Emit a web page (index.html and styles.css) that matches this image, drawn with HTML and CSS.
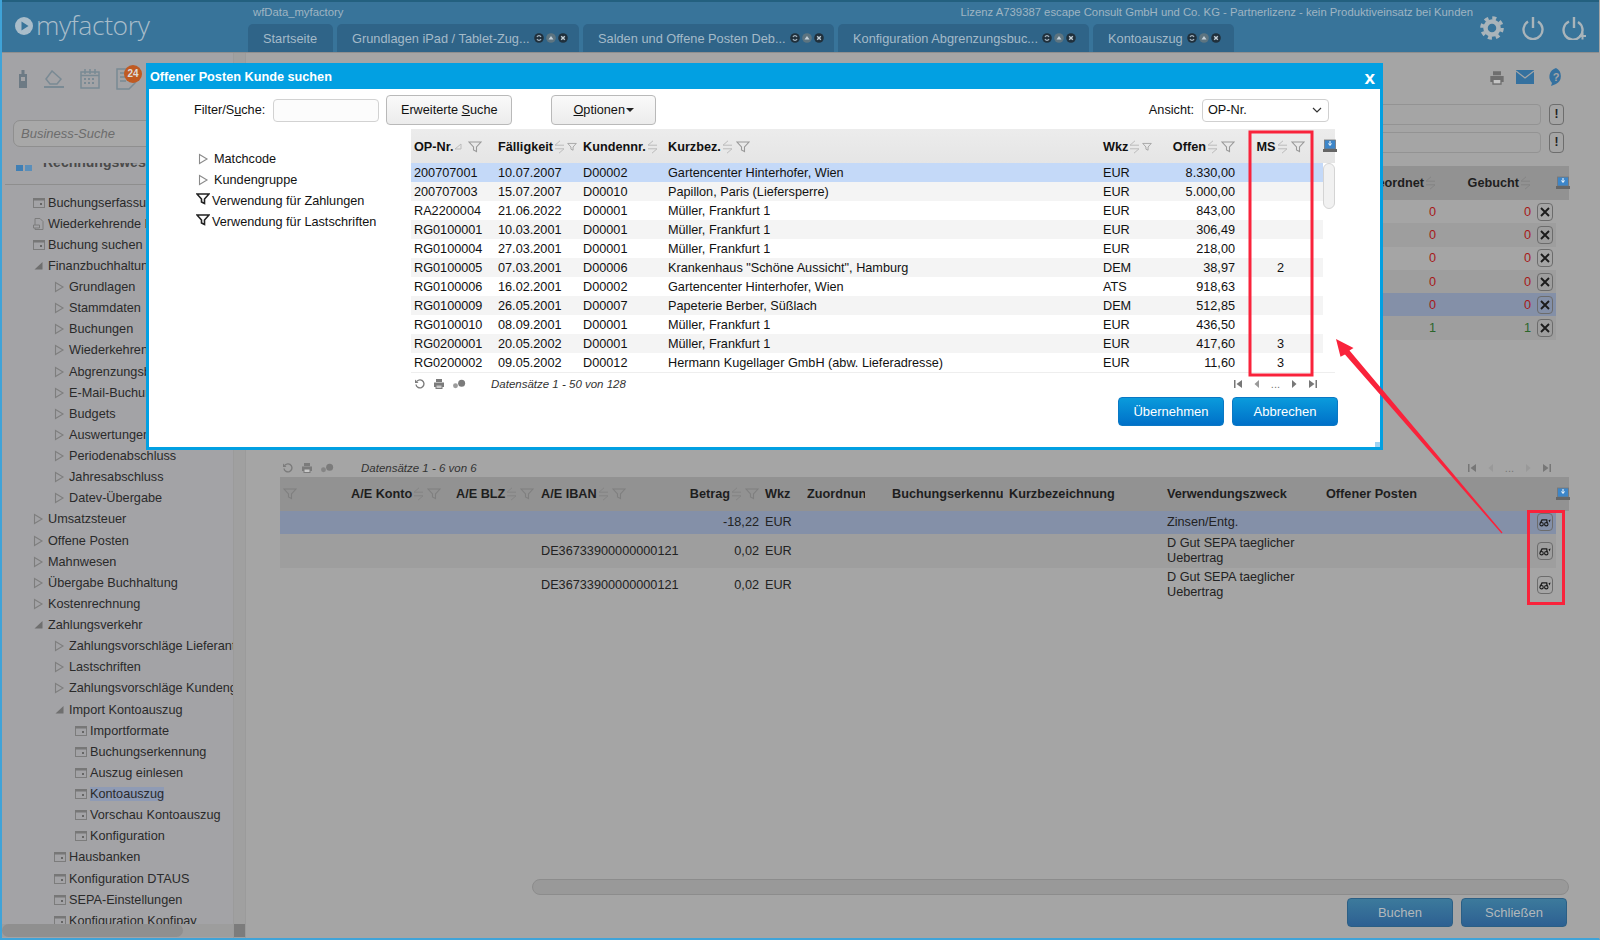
FILE: index.html
```html
<!DOCTYPE html>
<html>

<head>
	<meta charset="UTF-8">
	<title>myfactory - Kontoauszug</title>
	<link rel="stylesheet" href="styles.css">
</head>

<body>
	<svg class="defs" width="0" height="0">
		<symbol id="i-win" viewBox="0 0 14 14"><rect x="1.5" y="2.5" width="11" height="9" fill="none" stroke="#7c7c7c"/><rect x="1" y="2" width="12" height="2.5" fill="#777"/><rect x="8" y="7" width="2" height="2" fill="#666"/></symbol>
		<symbol id="i-doc" viewBox="0 0 14 14"><path d="M3 1.5h5l3 3v8H3z" fill="none" stroke="#7c7c7c"/><path d="M1.5 8h6v3h-6z" fill="#a3a3a6" stroke="#7c7c7c"/></symbol>
		<symbol id="i-tri" viewBox="0 0 14 14"><path d="M2.5 2.5l7.5 4.5-7.5 4.5z" fill="none" stroke="currentColor" stroke-width="1.1"/></symbol>
		<symbol id="i-open" viewBox="0 0 14 14"><path d="M10.5 3v7.5h-8z" fill="#6f6f6f"/></symbol>
		<symbol id="i-funnel" viewBox="0 0 14 12"><path d="M1 1h12L8.5 6v4.5L5.5 9V6z" fill="none" stroke="currentColor" stroke-width="1.1"/></symbol>
		<symbol id="i-funnel-b" viewBox="0 0 14 12"><path d="M1 1h12L8.5 6v4.5L5.5 9V6z" fill="none" stroke="#222" stroke-width="1.6"/></symbol>
		<symbol id="i-sort" viewBox="0 0 11 14"><path d="M6 .8L1 5.2h9M5 13.2l5-4.4H1" fill="none" stroke="currentColor"/></symbol>
		<symbol id="i-up" viewBox="0 0 11 14"><path d="M1 9l6-5v5z" fill="none" stroke="currentColor"/></symbol>
		<symbol id="i-cfg" viewBox="0 0 14 14"><rect x="1.500" y="1" width="11" height="9" fill="#3d86c9" stroke="#777" stroke-width=".8"/><path d="M7 2v4M5.500 4.500L7 6.500l1.500-2" stroke="#fff" fill="none"/><rect x="0" y="10" width="14" height="3" fill="#666"/></symbol>
		<symbol id="i-refresh" viewBox="0 0 12 12"><path d="M3 3.200A4 4 0 1 1 2 6.500" fill="none" stroke="currentColor" stroke-width="1.400"/><path d="M1 1.500v3.500h3.500z" fill="currentColor"/></symbol>
		<symbol id="i-print" viewBox="0 0 12 12"><path d="M3 1h6v3H3zM1 4.500h10V9H9.500v2h-7V9H1z" fill="currentColor"/><path d="M3.500 7.500h5V10h-5z" fill="#fff" fill-opacity=".6"/></symbol>
		<symbol id="i-gears" viewBox="0 0 16 12"><circle cx="4" cy="8" r="2.800" fill="currentColor" fill-opacity=".75"/><circle cx="11" cy="5" r="4" fill="currentColor"/></symbol>
		<symbol id="i-first" viewBox="0 0 10 10"><path d="M1 1h1.500v8H1zM9 1v8L3.500 5z" fill="currentColor"/></symbol>
		<symbol id="i-last" viewBox="0 0 10 10"><path d="M9 1H7.500v8H9zM1 1v8l5.500-4z" fill="currentColor"/></symbol>
		<symbol id="i-prev" viewBox="0 0 10 10"><path d="M7 1v8L2.500 5z" fill="currentColor"/></symbol>
		<symbol id="i-next" viewBox="0 0 10 10"><path d="M3 1v8l4.500-4z" fill="currentColor"/></symbol>
		<symbol id="i-x" viewBox="0 0 12 12"><path d="M2 2l8 8M10 2l-8 8" stroke="#1c1c1c" stroke-width="1.900"/></symbol>
		<symbol id="i-bino" viewBox="0 0 14 10"><path d="M1.500 6l2-4h5.500l.5 4" fill="none" stroke="#1c1c1c" stroke-width="1.500"/><circle cx="3" cy="7" r="2" fill="none" stroke="#1c1c1c" stroke-width="1.300"/><circle cx="8.500" cy="7" r="2" fill="none" stroke="#1c1c1c" stroke-width="1.300"/><path d="M11 2.500l2.500-1-1 3.500z" fill="#1c1c1c"/></symbol>
		<symbol id="t-ref" viewBox="0 0 10 10"><circle cx="5" cy="5" r="4.800" fill="#20303c"/><path d="M3 4a2.200 2.200 0 0 1 4 0M7 6a2.200 2.200 0 0 1-4 0" fill="none" stroke="#a6b6c2" stroke-width="1.200"/></symbol>
		<symbol id="t-up" viewBox="0 0 10 10"><circle cx="5" cy="5" r="4.800" fill="#5d7480"/><path d="M2.500 6.500L5 3l2.500 3.500z" fill="#c4d0d8"/></symbol>
		<symbol id="t-x" viewBox="0 0 10 10"><circle cx="5" cy="5" r="4.800" fill="#20303c"/><path d="M3.200 3.200l3.600 3.600M6.800 3.200L3.200 6.800" stroke="#c4d0d8" stroke-width="1.400"/></symbol>
	</svg>

	<div class="screen">
		<header class="topbar">
			<div class="logo">
				<svg class="logo-mark" viewBox="0 0 18 18"><circle cx="9" cy="9" r="9" fill="#a9bdca"/><path d="M6.500 4.500l7 4.500-7 4.500z" fill="#38749a"/></svg>
				<span>myfactory</span>
			</div>
			<div class="top-mid">
				<div class="top-info">
					<span>wfData_myfactory</span>
					<span class="license">Lizenz A739387 escape Consult GmbH und Co. KG - Partnerlizenz - kein Produktiveinsatz bei Kunden</span>
				</div>
				<nav class="tabs">
					<div class="tab tab-home">Startseite</div>
					<div class="tab tab-a"><span>Grundlagen iPad / Tablet-Zug...</span><svg class="ti"><use href="#t-ref"/></svg><svg class="ti"><use href="#t-up"/></svg><svg class="ti"><use href="#t-x"/></svg></div>
					<div class="tab tab-b"><span>Salden und Offene Posten Deb...</span><svg class="ti"><use href="#t-ref"/></svg><svg class="ti"><use href="#t-up"/></svg><svg class="ti"><use href="#t-x"/></svg></div>
					<div class="tab tab-c"><span>Konfiguration Abgrenzungsbuc...</span><svg class="ti"><use href="#t-ref"/></svg><svg class="ti"><use href="#t-up"/></svg><svg class="ti"><use href="#t-x"/></svg></div>
					<div class="tab tab-d"><span>Kontoauszug</span><svg class="ti"><use href="#t-ref"/></svg><svg class="ti"><use href="#t-up"/></svg><svg class="ti"><use href="#t-x"/></svg></div>
				</nav>
			</div>
			<div class="top-icons">
				<svg viewBox="0 0 24 24" width="24" height="24"><circle cx="12" cy="12" r="6.500" fill="none" stroke="#a9b4ba" stroke-width="4.500"/><circle cx="12" cy="12" r="10" fill="none" stroke="#a9b4ba" stroke-width="3.600" stroke-dasharray="4 3.850"/></svg>
				<svg viewBox="0 0 24 24" width="24" height="24"><path d="M7 5.500a9.500 9.500 0 1 0 10 0M12 1v11" fill="none" stroke="#a9b4ba" stroke-width="2.400"/></svg>
				<svg viewBox="0 0 24 24" width="24" height="24"><path d="M7 5.500a9.500 9.500 0 1 0 9 .5M12 1v11" fill="none" stroke="#a9b4ba" stroke-width="2.400"/><path d="M17 20h7M20.500 16.500v7" stroke="#a9b4ba" stroke-width="2"/></svg>
			</div>
		</header>

		<div class="workspace">
			<aside class="sidebar">
				<div class="side-tools">
					<svg viewBox="0 0 10 18" width="10" height="18"><path d="M3.500 0h3v4h2.500v14H1V4h2.500z" fill="#6d7a84"/><rect x="3" y="7" width="4" height="4" fill="#a3a3a6"/></svg>
					<svg viewBox="0 0 20 18" width="20" height="18"><path d="M2 9l6-8 9 8-4 5H6z" fill="none" stroke="#7a8a94" stroke-width="1.500"/><path d="M0 17h20" stroke="#7a8a94" stroke-width="2"/></svg>
					<svg viewBox="0 0 20 20" width="20" height="20"><rect x="1" y="3" width="18" height="16" fill="none" stroke="#7a8a94" stroke-width="1.500"/><path d="M1 6.500h18M5 0v5M15 0v5M10 0v5" stroke="#7a8a94" stroke-width="1.500"/><path d="M4 10h12M4 14h12" stroke="#7a8a94" stroke-width="2" stroke-dasharray="2 2"/></svg>
					<div class="notes">
						<svg viewBox="0 0 20 22" width="20" height="22"><path d="M1 1h18v14l-6 6H1z" fill="none" stroke="#7a8a94" stroke-width="1.500"/><path d="M4 5h9M4 9h9M4 13h6" stroke="#7a8a94" stroke-width="1.500"/></svg>
						<span class="badge">24</span>
					</div>
				</div>
				<div class="side-search">Business-Suche</div>
				<div class="side-head">
					<svg viewBox="0 0 17 6" width="17" height="6"><rect width="7" height="6" fill="#3f7fb5"/><rect x="9" width="7" height="6" fill="#5b8fba"/></svg>
					<span>Rechnungswesen</span>
				</div>
				<ul class="tree">
					<li class="l1"><svg class="ic"><use href="#i-win"/></svg>Buchungserfassung</li>
					<li class="l1"><svg class="ic"><use href="#i-doc"/></svg>Wiederkehrende Buchungen</li>
					<li class="l1"><svg class="ic"><use href="#i-win"/></svg>Buchung suchen</li>
					<li class="l1"><svg class="ic"><use href="#i-open"/></svg>Finanzbuchhaltung</li>
					<li class="l2"><svg class="ic"><use href="#i-tri"/></svg>Grundlagen</li>
					<li class="l2"><svg class="ic"><use href="#i-tri"/></svg>Stammdaten</li>
					<li class="l2"><svg class="ic"><use href="#i-tri"/></svg>Buchungen</li>
					<li class="l2"><svg class="ic"><use href="#i-tri"/></svg>Wiederkehrende Buchungen</li>
					<li class="l2"><svg class="ic"><use href="#i-tri"/></svg>Abgrenzungsbuchungen</li>
					<li class="l2"><svg class="ic"><use href="#i-tri"/></svg>E-Mail-Buchungen</li>
					<li class="l2"><svg class="ic"><use href="#i-tri"/></svg>Budgets</li>
					<li class="l2"><svg class="ic"><use href="#i-tri"/></svg>Auswertungen</li>
					<li class="l2"><svg class="ic"><use href="#i-tri"/></svg>Periodenabschluss</li>
					<li class="l2"><svg class="ic"><use href="#i-tri"/></svg>Jahresabschluss</li>
					<li class="l2"><svg class="ic"><use href="#i-tri"/></svg>Datev-Übergabe</li>
					<li class="l1"><svg class="ic"><use href="#i-tri"/></svg>Umsatzsteuer</li>
					<li class="l1"><svg class="ic"><use href="#i-tri"/></svg>Offene Posten</li>
					<li class="l1"><svg class="ic"><use href="#i-tri"/></svg>Mahnwesen</li>
					<li class="l1"><svg class="ic"><use href="#i-tri"/></svg>Übergabe Buchhaltung</li>
					<li class="l1"><svg class="ic"><use href="#i-tri"/></svg>Kostenrechnung</li>
					<li class="l1"><svg class="ic"><use href="#i-open"/></svg>Zahlungsverkehr</li>
					<li class="l2"><svg class="ic"><use href="#i-tri"/></svg>Zahlungsvorschläge Lieferanten</li>
					<li class="l2"><svg class="ic"><use href="#i-tri"/></svg>Lastschriften</li>
					<li class="l2"><svg class="ic"><use href="#i-tri"/></svg>Zahlungsvorschläge Kundengruppen</li>
					<li class="l2"><svg class="ic"><use href="#i-open"/></svg>Import Kontoauszug</li>
					<li class="l3"><svg class="ic"><use href="#i-win"/></svg>Importformate</li>
					<li class="l3"><svg class="ic"><use href="#i-win"/></svg>Buchungserkennung</li>
					<li class="l3"><svg class="ic"><use href="#i-win"/></svg>Auszug einlesen</li>
					<li class="l3"><svg class="ic"><use href="#i-win"/></svg><span class="current">Kontoauszug</span></li>
					<li class="l3"><svg class="ic"><use href="#i-win"/></svg>Vorschau Kontoauszug</li>
					<li class="l3"><svg class="ic"><use href="#i-win"/></svg>Konfiguration</li>
					<li class="l2"><svg class="ic"><use href="#i-win"/></svg>Hausbanken</li>
					<li class="l2"><svg class="ic"><use href="#i-win"/></svg>Konfiguration DTAUS</li>
					<li class="l2"><svg class="ic"><use href="#i-win"/></svg>SEPA-Einstellungen</li>
					<li class="l2"><svg class="ic"><use href="#i-win"/></svg>Konfiguration Konfipay</li>
				</ul>
				<div class="side-hscroll"><div class="side-thumb"></div></div>
			</aside>
			<div class="vbar"><div class="side-corner"></div></div>

			<main class="main">
				<div class="main-tools">
					<svg viewBox="0 0 16 16" width="16" height="16"><use href="#i-print"/></svg>
					<svg class="mail" viewBox="0 0 18 14" width="18" height="14"><rect width="18" height="14" fill="#35719f"/><path d="M0 1l9 7 9-7" fill="none" stroke="#a5a5a5" stroke-width="1.300"/></svg>
					<svg class="help" viewBox="0 0 18 18" width="18" height="18"><path d="M9 0a9 9 0 0 1 0 16l-5 2 1-3A9 9 0 0 1 9 0z" fill="#35719f"/><text x="9" y="13" font-size="11" font-weight="bold" text-anchor="middle" fill="#a5a5a5" font-family="Liberation Sans">?</text></svg>
				</div>
				<div class="field-row"><div class="field"></div><div class="bang">!</div></div>
				<div class="field-row"><div class="field"></div><div class="bang">!</div></div>

				<table class="grid grid-top">
					<colgroup><col><col class="w-zu"><col class="w-ge"><col class="w-ac"><col class="w-gut"></colgroup>
					<tr>
						<th></th>
						<th class="r"><span class="hd">Zugeordnet<svg class="so"><use href="#i-sort"/></svg></span></th>
						<th class="r"><span class="hd">Gebucht<svg class="so"><use href="#i-sort"/></svg></span></th>
						<th></th>
						<th class="cfg"><svg class="cf"><use href="#i-cfg"/></svg></th>
					</tr>
					<tr><td></td><td class="num red">0</td><td class="num red">0</td><td class="ac"><span class="xbtn"><svg><use href="#i-x"/></svg></span></td><td class="gut"></td></tr>
					<tr class="alt"><td></td><td class="num red">0</td><td class="num red">0</td><td class="ac"><span class="xbtn"><svg><use href="#i-x"/></svg></span></td><td class="gut"></td></tr>
					<tr><td></td><td class="num red">0</td><td class="num red">0</td><td class="ac"><span class="xbtn"><svg><use href="#i-x"/></svg></span></td><td class="gut"></td></tr>
					<tr class="alt"><td></td><td class="num red">0</td><td class="num red">0</td><td class="ac"><span class="xbtn"><svg><use href="#i-x"/></svg></span></td><td class="gut"></td></tr>
					<tr class="sel"><td></td><td class="num red">0</td><td class="num red">0</td><td class="ac"><span class="xbtn"><svg><use href="#i-x"/></svg></span></td><td class="gut"></td></tr>
					<tr class="alt"><td></td><td class="num green">1</td><td class="num green">1</td><td class="ac"><span class="xbtn"><svg><use href="#i-x"/></svg></span></td><td class="gut"></td></tr>
				</table>

				<div class="pager pager-main">
					<svg class="pi"><use href="#i-refresh"/></svg><svg class="pi"><use href="#i-print"/></svg><svg class="pi pi-w"><use href="#i-gears"/></svg>
					<span class="pager-text">Datensätze 1 - 6 von 6</span>
					<div class="pager-nav"><svg><use href="#i-first"/></svg><svg class="off"><use href="#i-prev"/></svg><span>...</span><svg class="off"><use href="#i-next"/></svg><svg><use href="#i-last"/></svg></div>
				</div>

				<table class="grid grid-low">
					<colgroup><col class="c-f"><col class="c-ko"><col class="c-bl"><col class="c-ib"><col class="c-be"><col class="c-wk"><col class="c-zu"><col class="c-bu"><col class="c-ku"><col class="c-ve"><col><col class="c-ac"><col class="w-gut"></colgroup>
					<tr>
						<th><svg class="fu fu-first"><use href="#i-funnel"/></svg></th>
						<th><span class="hd">A/E Konto<svg class="so"><use href="#i-sort"/></svg><svg class="fu"><use href="#i-funnel"/></svg></span></th>
						<th><span class="hd">A/E BLZ<svg class="so"><use href="#i-sort"/></svg><svg class="fu"><use href="#i-funnel"/></svg></span></th>
						<th><span class="hd">A/E IBAN<svg class="so"><use href="#i-sort"/></svg><svg class="fu"><use href="#i-funnel"/></svg></span></th>
						<th class="r"><span class="hd">Betrag<svg class="so"><use href="#i-sort"/></svg><svg class="fu"><use href="#i-funnel"/></svg></span></th>
						<th>Wkz</th>
						<th><div class="clip clip-zu">Zuordnung</div></th>
						<th><div class="clip">Buchungserkennung</div></th>
						<th>Kurzbezeichnung</th>
						<th>Verwendungszweck</th>
						<th>Offener Posten</th>
						<th></th>
						<th class="cfg"><svg class="cf"><use href="#i-cfg"/></svg></th>
					</tr>
					<tr class="sel r1"><td></td><td></td><td></td><td></td><td class="num">-18,22</td><td>EUR</td><td></td><td></td><td></td><td>Zinsen/Entg.</td><td></td><td class="ac"><span class="bbtn"><svg><use href="#i-bino"/></svg></span></td><td class="gut"></td></tr>
					<tr class="alt r2"><td></td><td></td><td></td><td>DE36733900000000121</td><td class="num">0,02</td><td>EUR</td><td></td><td></td><td></td><td>D Gut SEPA taeglicher<br>Uebertrag</td><td></td><td class="ac"><span class="bbtn"><svg><use href="#i-bino"/></svg></span></td><td class="gut"></td></tr>
					<tr class="r2"><td></td><td></td><td></td><td>DE36733900000000121</td><td class="num">0,02</td><td>EUR</td><td></td><td></td><td></td><td>D Gut SEPA taeglicher<br>Uebertrag</td><td></td><td class="ac"><span class="bbtn"><svg><use href="#i-bino"/></svg></span></td><td class="gut"></td></tr>
				</table>

				<div class="main-hscroll"></div>
				<div class="main-actions">
					<button class="dim-btn">Buchen</button>
					<button class="dim-btn">Schließen</button>
				</div>
			</main>
		</div>

		<!-- dialog -->
		<section class="dialog">
			<div class="dialog-title"><span>Offener Posten Kunde suchen</span><span class="dialog-close">x</span></div>
			<div class="dialog-tools">
				<label class="lbl">Filter/S<u>u</u>che:</label>
				<div class="inp"></div>
				<button class="btn btn-search">Erweiterte <u>S</u>uche</button>
				<button class="btn btn-opt"><u>O</u>ptionen<span class="caret"></span></button>
				<label class="lbl lbl-view">Ansicht:</label>
				<div class="select">OP-Nr.<svg viewBox="0 0 10 6" width="10" height="6"><path d="M1 1l4 4 4-4" fill="none" stroke="#333" stroke-width="1.200"/></svg></div>
			</div>
			<div class="dialog-body">
				<ul class="filters">
					<li class="f-tri"><svg class="fi"><use href="#i-tri"/></svg>Matchcode</li>
					<li class="f-tri"><svg class="fi"><use href="#i-tri"/></svg>Kundengruppe</li>
					<li><svg class="fi2"><use href="#i-funnel-b"/></svg>Verwendung für Zahlungen</li>
					<li><svg class="fi2"><use href="#i-funnel-b"/></svg>Verwendung für Lastschriften</li>
				</ul>
				<div class="list">
					<table class="ops">
						<colgroup><col class="o-1"><col class="o-2"><col class="o-3"><col><col class="o-5"><col class="o-6"><col class="o-7"><col class="o-8"></colgroup>
						<tr>
							<th><span class="hd">OP-Nr.<svg class="so"><use href="#i-up"/></svg><svg class="fu"><use href="#i-funnel"/></svg></span></th>
							<th><span class="hd">Fälligkeit<svg class="so"><use href="#i-sort"/></svg><svg class="fu fu-s"><use href="#i-funnel"/></svg></span></th>
							<th><span class="hd">Kundennr.<svg class="so"><use href="#i-sort"/></svg></span></th>
							<th><span class="hd">Kurzbez.<svg class="so"><use href="#i-sort"/></svg><svg class="fu"><use href="#i-funnel"/></svg></span></th>
							<th><span class="hd">Wkz<svg class="so"><use href="#i-sort"/></svg><svg class="fu fu-s"><use href="#i-funnel"/></svg></span></th>
							<th class="r"><span class="hd">Offen<svg class="so"><use href="#i-sort"/></svg><svg class="fu"><use href="#i-funnel"/></svg></span></th>
							<th class="c"><span class="hd">MS<svg class="so"><use href="#i-sort"/></svg><svg class="fu"><use href="#i-funnel"/></svg></span></th>
							<th class="cfg"><svg class="cf"><use href="#i-cfg"/></svg></th>
						</tr>
						<tr class="sel"><td>200707001</td><td>10.07.2007</td><td>D00002</td><td>Gartencenter Hinterhofer, Wien</td><td>EUR</td><td class="num">8.330,00</td><td class="c"></td><td class="gut"></td></tr>
						<tr class="alt"><td>200707003</td><td>15.07.2007</td><td>D00010</td><td>Papillon, Paris (Liefersperre)</td><td>EUR</td><td class="num">5.000,00</td><td class="c"></td><td class="gut"></td></tr>
						<tr><td>RA2200004</td><td>21.06.2022</td><td>D00001</td><td>Müller, Frankfurt 1</td><td>EUR</td><td class="num">843,00</td><td class="c"></td><td class="gut"></td></tr>
						<tr class="alt"><td>RG0100001</td><td>10.03.2001</td><td>D00001</td><td>Müller, Frankfurt 1</td><td>EUR</td><td class="num">306,49</td><td class="c"></td><td class="gut"></td></tr>
						<tr><td>RG0100004</td><td>27.03.2001</td><td>D00001</td><td>Müller, Frankfurt 1</td><td>EUR</td><td class="num">218,00</td><td class="c"></td><td class="gut"></td></tr>
						<tr class="alt"><td>RG0100005</td><td>07.03.2001</td><td>D00006</td><td>Krankenhaus "Schöne Aussicht", Hamburg</td><td>DEM</td><td class="num">38,97</td><td class="c">2</td><td class="gut"></td></tr>
						<tr><td>RG0100006</td><td>16.02.2001</td><td>D00002</td><td>Gartencenter Hinterhofer, Wien</td><td>ATS</td><td class="num">918,63</td><td class="c"></td><td class="gut"></td></tr>
						<tr class="alt"><td>RG0100009</td><td>26.05.2001</td><td>D00007</td><td>Papeterie Berber, Süßlach</td><td>DEM</td><td class="num">512,85</td><td class="c"></td><td class="gut"></td></tr>
						<tr><td>RG0100010</td><td>08.09.2001</td><td>D00001</td><td>Müller, Frankfurt 1</td><td>EUR</td><td class="num">436,50</td><td class="c"></td><td class="gut"></td></tr>
						<tr class="alt"><td>RG0200001</td><td>20.05.2002</td><td>D00001</td><td>Müller, Frankfurt 1</td><td>EUR</td><td class="num">417,60</td><td class="c">3</td><td class="gut"></td></tr>
						<tr><td>RG0200002</td><td>09.05.2002</td><td>D00012</td><td>Hermann Kugellager GmbH (abw. Lieferadresse)</td><td>EUR</td><td class="num">11,60</td><td class="c">3</td><td class="gut"></td></tr>
					</table>
					<div class="list-thumb"></div>
					<div class="pager pager-dialog">
						<svg class="pi"><use href="#i-refresh"/></svg><svg class="pi"><use href="#i-print"/></svg><svg class="pi pi-w"><use href="#i-gears"/></svg>
						<span class="pager-text">Datensätze 1 - 50 von 128</span>
						<div class="pager-nav"><svg><use href="#i-first"/></svg><svg class="off"><use href="#i-prev"/></svg><span>...</span><svg><use href="#i-next"/></svg><svg><use href="#i-last"/></svg></div>
					</div>
					<div class="dialog-actions">
						<button class="blue-btn">Übernehmen</button>
						<button class="blue-btn">Abbrechen</button>
					</div>
				</div>
			</div>
			<div class="grip"></div>
		</section>

		<!-- annotations on top of the screenshot -->
		<svg class="marks" viewBox="0 0 1600 940" width="1600" height="940">
			<rect x="1250" y="132" width="62" height="243" fill="none" stroke="#f9233b" stroke-width="3"/>
			<rect x="1528.500" y="511.500" width="35" height="92" fill="none" stroke="#f9233b" stroke-width="3"/>
			<polygon points="1336,339 1353.500,348 1349.500,350.500 1502.500,532.500 1501.500,533.500 1345,354.500 1340.500,356.700" fill="#f9233b"/>
		</svg>
	</div>
</body>

</html>
```

FILE: styles.css
```css
* {
	box-sizing: border-box;
}

html,
body {
	margin: 0;
	height: 100%;
	overflow: hidden;
}

body {
	font-family: "Liberation Sans", Arial, sans-serif;
	font-size: 12.700px;
	color: #222;
}

ul {
	list-style: none;
	margin: 0;
	padding: 0;
}

.defs {
	position: absolute;
}

.screen {
	position: relative;
	width: 1600px;
	height: 940px;
	display: flex;
	flex-direction: column;
	background: #a5a5a5;
	border-left: 2px solid #3fa3d8;
	border-bottom: 2px solid #3fa3d8;
	border-right: 1px solid #a5a5a5;
}

/* top bar */
.topbar {
	height: 53px;
	flex: none;
	display: flex;
	background: #38749a;
	border-top: 2px solid #23607f;
	border-bottom: 1px solid #8f8f8f;
	color: #a9bdca;
}

.logo {
	width: 246px;
	display: flex;
	align-items: center;
	gap: 3px;
	padding: 0 0 5px 13px;
	font-family: "Open Sans", sans-serif;
	font-weight: 300;
	font-size: 26.500px;
	letter-spacing: -0.4px;
}

.logo-mark {
	width: 18px;
	height: 18px;
	margin-top: 3px;
}

.top-mid {
	width: 1228px;
	display: flex;
	flex-direction: column;
}

.top-info {
	height: 22px;
	display: flex;
	justify-content: space-between;
	align-items: center;
	padding: 0 3px 2px 5px;
	font-size: 11.300px;
	color: #9fb5c3;
}

.tabs {
	display: flex;
	gap: 4px;
	flex: 1;
}

.tab {
	display: flex;
	align-items: center;
	gap: 2px;
	padding: 0 5px 0 15px;
	background: #2f6488;
	border-radius: 5px 5px 0 0;
	font-size: 12.800px;
	color: #a4bac8;
	white-space: nowrap;
}

.tab span {
	margin-right: 2px;
}

.tab-home {
	width: 85px;
}

.tab-a {
	width: 242px;
}

.tab-b {
	width: 251px;
}

.tab-c {
	width: 251px;
}

.tab-d {
	width: 141px;
}

.ti {
	width: 10px;
	height: 10px;
}

.top-icons {
	flex: 1;
	display: flex;
	align-items: center;
	gap: 17px;
	padding: 2px 0 0 4px;
}

/* left column */
.workspace {
	flex: 1;
	display: flex;
	min-height: 0;
}

.sidebar {
	width: 231px;
	flex: none;
	display: flex;
	flex-direction: column;
	background: #a3a3a6;
	overflow: hidden;
}

.vbar {
	width: 13px;
	flex: none;
	display: flex;
	flex-direction: column;
	justify-content: flex-end;
	background: #a0a0a0;
	border-left: 1px solid #9b9b9b;
	border-right: 1px solid #9b9b9b;
}

.side-corner {
	height: 13px;
	margin-bottom: 1px;
	background: #7c7c7c;
}

.side-tools {
	height: 52px;
	display: flex;
	align-items: center;
	gap: 16px;
	padding: 0 0 0 16px;
	flex: none;
}

.notes {
	position: relative;
	height: 22px;
}

.badge {
	position: absolute;
	left: 8px;
	top: -3px;
	width: 18px;
	height: 18px;
	border-radius: 50%;
	background: #c05a22;
	color: #ddd;
	font-weight: bold;
	font-size: 10px;
	line-height: 18px;
	text-align: center;
}

.side-search {
	flex: none;
	width: 160px;
	height: 27px;
	margin: 15px 0 0 11px;
	padding-left: 7px;
	border: 1px solid #8f8f8f;
	border-radius: 7px;
	background: #a8a8a8;
	font-style: italic;
	font-size: 13px;
	line-height: 25px;
	color: #6c6c6c;
}

.side-head {
	flex: none;
	height: 21px;
	margin: 16px 0 0;
	padding-left: 14px;
	display: flex;
	gap: 10px;
	overflow: hidden;
	font-size: 14px;
	font-weight: bold;
	line-height: 14px;
	white-space: nowrap;
	color: #4a4a4a;
}

.side-head svg {
	margin-top: 2px;
}

.side-head span {
	margin-top: -8px;
}

.tree {
	flex: 1;
	min-height: 0;
	margin: 0 0 0 3px;
	padding-top: 7px;
	border-top: 1px solid #8e8e8e;
	overflow: hidden;
}

.tree li {
	height: 21.140px;
	display: flex;
	align-items: center;
	gap: 2px;
	white-space: nowrap;
	color: #2a2a2a;
}

.ic {
	width: 14px;
	height: 14px;
	flex: none;
	color: #7e7e7e;
}

.l1 {
	padding-left: 27px;
}

.l2 {
	padding-left: 48px;
}

.l3 {
	padding-left: 69px;
}

.current {
	background: #8f9bb5;
}

.side-hscroll {
	flex: none;
	height: 13px;
	margin-bottom: 1px;
	background: #9d9d9d;
}

.side-thumb {
	width: 181px;
	height: 100%;
	background: #8f8f8f;
	border-radius: 7px;
}

/* main area */
.main {
	flex: 1;
	min-width: 0;
	display: flex;
	flex-direction: column;
	padding: 0 30px 0 34px;
}

.main-tools {
	height: 49px;
	flex: none;
	display: flex;
	justify-content: flex-end;
	align-items: center;
	gap: 11px;
	padding: 0 4px 0 0;
	color: #6f6f6f;
}

.mail {
	margin: 0 2px 2px 0;
}

.help {
	margin-bottom: 2px;
}

.field-row {
	height: 28px;
	flex: none;
	display: flex;
	justify-content: flex-end;
	gap: 8px;
	padding: 2px 5px 0 0;
}

.field {
	width: 300px;
	height: 21px;
	border: 1px solid #939393;
	border-radius: 4px;
}

.bang {
	width: 15px;
	height: 21px;
	border: 1px solid #6d6d6d;
	border-radius: 4px;
	font-weight: bold;
	font-size: 12px;
	line-height: 19px;
	text-align: center;
}

.grid {
	width: 100%;
	flex: none;
	table-layout: fixed;
	border-collapse: collapse;
}

.grid th {
	height: 34px;
	padding: 0 3px;
	background: #929292;
	font-weight: bold;
	text-align: left;
	white-space: nowrap;
	color: #1e1e1e;
}

.grid td {
	padding: 0 3px;
	color: #222;
}

.grid-top {
	margin-top: 8px;
}

.grid-top td {
	height: 23.300px;
}

.w-zu {
	width: 100px;
}

.w-ge {
	width: 95px;
}

.w-ac {
	width: 22px;
}

.w-gut {
	width: 13px;
}

.grid th.r,
.ops th.r {
	text-align: right;
}

.grid .alt td {
	background: #9e9e9e;
}

.grid .sel td {
	background: #8490a8;
}

.grid td.gut {
	background: #a5a5a5;
	padding: 0;
}

.grid th.cfg,
.ops th.cfg {
	padding: 0;
	text-align: right;
}

.hd {
	display: inline-flex;
	align-items: center;
}

.so {
	width: 11px;
	height: 14px;
	margin-left: 1px;
	flex: none;
	color: #848484;
}

.fu {
	width: 14px;
	height: 12px;
	margin-left: 3px;
	flex: none;
	color: #7f7f7f;
}

.fu-first {
	margin: 0;
	vertical-align: middle;
}

.fu-s {
	width: 10px;
	margin-left: 2px;
}

.cf {
	width: 14px;
	height: 14px;
	display: block;
}

.num {
	text-align: right;
}

.red {
	color: #a61a1a !important;
	padding-right: 0;
}

.green {
	color: #2c662c !important;
}

.ac {
	text-align: right;
}

.xbtn,
.bbtn {
	display: inline-flex;
	align-items: center;
	justify-content: center;
	width: 16px;
	height: 18px;
	border: 1px solid #6c6c6c;
	border-radius: 4px;
	vertical-align: middle;
}

.xbtn svg {
	width: 12px;
	height: 12px;
}

.bbtn {
	height: 18px;
}

.bbtn svg {
	width: 12px;
	height: 9px;
}

.pager {
	display: flex;
	align-items: center;
	flex: none;
}

.pi {
	width: 12px;
	height: 12px;
	margin-right: 7px;
	color: #7b7b7b;
}

.pi-w {
	width: 14px;
}

.pager-text {
	font-style: italic;
	font-size: 11.500px;
	color: #333;
}

.pager-main {
	height: 17px;
	margin-top: 120px;
	padding: 0 17px 0 2px;
}

.pager-main .pager-text {
	margin-left: 20px;
}

.pager-nav {
	margin-left: auto;
	display: flex;
	align-items: center;
	gap: 9px;
	font-size: 11px;
	color: #777;
}

.pager-nav svg {
	width: 10px;
	height: 10px;
}

.pager-nav .off {
	color: #999;
}

.grid-low td {
	line-height: 15px;
}

.grid-low .r1 td {
	height: 23px;
}

.grid-low .r2 td {
	height: 34px;
	padding-top: 1px;
}

.clip {
	overflow: hidden;
}

.clip-zu {
	width: 58px;
}

.c-f {
	width: 68px;
}

.c-ko {
	width: 105px;
}

.c-bl {
	width: 85px;
}

.c-ib {
	width: 142px;
}

.c-be {
	width: 82px;
}

.c-wk {
	width: 42px;
}

.c-zu {
	width: 85px;
}

.c-bu {
	width: 117px;
}

.c-ku {
	width: 158px;
}

.c-ve {
	width: 159px;
}

.c-ac {
	width: 28px;
}

.main-hscroll {
	height: 16px;
	margin: auto 0 3px 252px;
	flex: none;
	background: #999;
	border: 1px solid #8c8c8c;
	border-radius: 8px;
}

.main-actions {
	flex: none;
	display: flex;
	justify-content: flex-end;
	gap: 8px;
	height: 40px;
	padding-right: 2px;
}

.dim-btn {
	width: 106px;
	height: 29px;
	border: 1px solid #2b5f85;
	border-radius: 4px;
	background: linear-gradient(#3c7a9c, #2d6092);
	font: 13px "Liberation Sans", Arial, sans-serif;
	color: #b2b8bc;
}

/* dialog */
.dialog {
	position: absolute;
	left: 144px;
	top: 63px;
	width: 1237px;
	height: 387px;
	display: flex;
	flex-direction: column;
	background: #fff;
	border: 3px solid #02a0e2;
	border-top: 0;
	color: #111;
}

.dialog-title {
	height: 26px;
	flex: none;
	margin: 0 -3px;
	display: flex;
	justify-content: space-between;
	align-items: center;
	padding: 1px 8px 0 4px;
	background: #02a0e2;
	color: #fff;
	font-weight: bold;
	font-size: 12.700px;
}

.dialog-close {
	font-size: 19px;
	line-height: 26px;
	margin-top: 3px;
}

.dialog-tools {
	height: 40px;
	flex: none;
	display: flex;
	align-items: center;
	padding: 2px 51px 0 45px;
}

.lbl {
	margin-right: 8px;
}

.inp {
	width: 106px;
	height: 23px;
	border: 1px solid #d2d2d2;
	border-radius: 4px;
	background: #fcfcfc;
}

.btn {
	height: 30px;
	border: 1px solid #b9b9b9;
	border-radius: 4px;
	background: linear-gradient(#fafafa, #ececec);
	font: 12.700px "Liberation Sans", Arial, sans-serif;
	color: #111;
}

.btn-search {
	width: 126px;
	margin-left: 7px;
}

.btn-opt {
	width: 105px;
	margin-left: 39px;
}

.caret {
	display: inline-block;
	margin-left: 1px;
	border: 4px solid transparent;
	border-top-color: #222;
	border-bottom: 0;
	vertical-align: 2px;
}

.lbl-view {
	margin-left: auto;
}

.select {
	width: 127px;
	height: 23px;
	padding: 0 6px 0 5px;
	display: flex;
	justify-content: space-between;
	align-items: center;
	border: 1px solid #d0d0d0;
	border-radius: 4px;
}

.dialog-body {
	flex: 1;
	display: flex;
	min-height: 0;
}

.filters {
	width: 262px;
	flex: none;
	padding: 19px 0 0 46px;
}

.filters li {
	height: 21px;
	display: flex;
	align-items: center;
	gap: 2px;
	padding-left: 3px;
}

.filters .f-tri {
	gap: 3px;
	padding-left: 3px;
}

.fi {
	width: 14px;
	height: 14px;
	color: #8a8a8a;
	margin-left: -1px;
}

.fi2 {
	width: 14px;
	height: 12px;
	margin-top: -4px;
	margin-left: -2px;
}

.list {
	position: relative;
	width: 924px;
	flex: none;
}

.ops {
	width: 924px;
	table-layout: fixed;
	border-collapse: collapse;
	border-bottom: 1px solid #eee;
}

.ops th {
	height: 34px;
	padding: 1px 3px 0;
	background: linear-gradient(#ececec, #e5e5e5);
	font-weight: bold;
	text-align: left;
	white-space: nowrap;
	color: #111;
}

.ops td {
	height: 19px;
	padding: 1px 3px 0;
	line-height: 18px;
	white-space: nowrap;
	color: #111;
}

.ops .so {
	color: #bbb;
}

.ops .fu {
	color: #999;
}

.ops .alt td {
	background: #f4f4f4;
}

.ops .sel td {
	background: #c4d9f8;
}

.ops td.gut {
	background: #fff;
	padding: 0;
}

.ops .c {
	text-align: center;
}

.o-1 {
	width: 84px;
}

.o-2,
.o-3 {
	width: 85px;
}

.o-5 {
	width: 50px;
}

.o-6 {
	width: 88px;
}

.o-7 {
	width: 85px;
}

.o-8 {
	width: 12px;
}

.list-thumb {
	position: absolute;
	right: 0;
	top: 34px;
	width: 12px;
	height: 46px;
	border: 1px solid #d4d4d4;
	border-radius: 6px;
	background: #f1f1f1;
}

.pager-dialog {
	height: 22px;
	margin-bottom: 2px;
	padding: 0 17px 0 3px;
}

.pager-dialog .pager-text {
	margin-left: 18px;
}

.dialog-actions {
	display: flex;
	justify-content: flex-end;
	gap: 8px;
	margin-right: -3px;
}

.blue-btn {
	width: 106px;
	height: 29px;
	border: 1px solid #0a78c4;
	border-radius: 4px;
	background: linear-gradient(#0a9bdc, #0070c8);
	font: 13px "Liberation Sans", Arial, sans-serif;
	color: #fff;
}

.grip {
	position: absolute;
	right: 0;
	bottom: 0;
	width: 5px;
	height: 5px;
	background: #9fd3f3;
}

.marks {
	position: absolute;
	left: -2px;
	top: 0;
	pointer-events: none;
}
```
